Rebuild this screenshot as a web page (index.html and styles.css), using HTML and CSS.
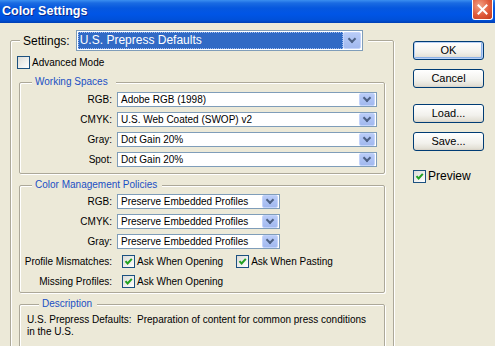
FILE: index.html
```html
<!DOCTYPE html>
<html>
<head>
	<title>Color Settings</title>
	<link rel="stylesheet" href="styles.css">
</head>
<body>
	<div class="window">
		<!-- title bar -->
		<div class="titlebar">
			<span class="title">Color Settings</span>
			<span class="close">
				<svg width="11" height="11" viewBox="0 0 11 11"><path d="M1.5 1.5 L9.5 9.5 M9.5 1.5 L1.5 9.5" stroke="#fff" stroke-width="2" stroke-linecap="square"/></svg>
			</span>
		</div>

		<div class="client">
			<!-- left side: settings groups -->
			<div class="main">
				<fieldset class="group outer">
					<legend class="settings">
						<span class="settings-label">Settings:</span>
						<span class="combo combo-big"><span class="combo-value selected">U.S. Prepress Defaults</span><span class="drop"></span></span>
					</legend>

					<div class="check-row advanced"><span class="check"></span>Advanced Mode</div>

					<fieldset class="group inner spaces">
						<legend>Working Spaces</legend>
						<div class="form-grid">
							<span class="field-label">RGB:</span>
							<span class="combo combo-wide"><span class="combo-value">Adobe RGB (1998)</span><span class="drop"></span></span>
							<span class="field-label">CMYK:</span>
							<span class="combo combo-wide"><span class="combo-value">U.S. Web Coated (SWOP) v2</span><span class="drop"></span></span>
							<span class="field-label">Gray:</span>
							<span class="combo combo-wide"><span class="combo-value">Dot Gain 20%</span><span class="drop"></span></span>
							<span class="field-label">Spot:</span>
							<span class="combo combo-wide"><span class="combo-value">Dot Gain 20%</span><span class="drop"></span></span>
						</div>
					</fieldset>

					<fieldset class="group inner policies">
						<legend>Color Management Policies</legend>
						<div class="form-grid">
							<span class="field-label">RGB:</span>
							<span class="combo combo-short"><span class="combo-value">Preserve Embedded Profiles</span><span class="drop"></span></span>
							<span class="field-label">CMYK:</span>
							<span class="combo combo-short"><span class="combo-value">Preserve Embedded Profiles</span><span class="drop"></span></span>
							<span class="field-label">Gray:</span>
							<span class="combo combo-short"><span class="combo-value">Preserve Embedded Profiles</span><span class="drop"></span></span>
							<span class="field-label">Profile Mismatches:</span>
							<span class="check-group">
								<span class="check-row"><span class="check checked"><svg width="11" height="11" viewBox="0 0 11 11"><path d="M2.5 5.2 L4.6 7.5 L8.8 2.8" fill="none" stroke="#21a121" stroke-width="2"/></svg></span>Ask When Opening</span>
								<span class="check-row"><span class="check checked"><svg width="11" height="11" viewBox="0 0 11 11"><path d="M2.5 5.2 L4.6 7.5 L8.8 2.8" fill="none" stroke="#21a121" stroke-width="2"/></svg></span>Ask When Pasting</span>
							</span>
							<span class="field-label">Missing Profiles:</span>
							<span class="check-group">
								<span class="check-row"><span class="check checked"><svg width="11" height="11" viewBox="0 0 11 11"><path d="M2.5 5.2 L4.6 7.5 L8.8 2.8" fill="none" stroke="#21a121" stroke-width="2"/></svg></span>Ask When Opening</span>
							</span>
						</div>
					</fieldset>

					<fieldset class="group inner description">
						<legend>Description</legend>
						<p class="desc-text">U.S. Prepress Defaults:&nbsp; Preparation of content for common press conditions<br>in the U.S.</p>
					</fieldset>
				</fieldset>
			</div>

			<!-- right side: dialog buttons -->
			<div class="side">
				<div class="btn btn-default">OK</div>
				<div class="btn btn-spaced">Cancel</div>
				<div class="btn">Load...</div>
				<div class="btn">Save...</div>
				<div class="check-row preview"><span class="check checked"><svg width="11" height="11" viewBox="0 0 11 11"><path d="M2.5 5.2 L4.6 7.5 L8.8 2.8" fill="none" stroke="#21a121" stroke-width="2"/></svg></span>Preview</div>
			</div>
		</div>
	</div>
</body>
</html>
```

FILE: styles.css
```css
/* base window */
body {
	margin: 0;
	background-color: #ece9d8;
	font-family: "Liberation Sans", Arial, sans-serif;
	font-size: 10px;
	color: #000;
	overflow: hidden;
}

.window {
	width: 495px;
	height: 346px;
	overflow: hidden;
}

/* title bar */
.titlebar {
	height: 23px;
	display: flex;
	justify-content: space-between;
	align-items: flex-start;
	background: linear-gradient(to bottom, #3b8ff0 0, #1a6be2 3px, #0658de 8px, #0055e6 14px, #0050d8 20px, #003fb2 23px);
}

.title {
	padding-left: 2px;
	line-height: 23px;
	font-size: 12.5px;
	font-weight: bold;
	color: #fff;
	text-shadow: 1px 1px 0 #0a2a8c;
}

.close {
	width: 21px;
	height: 20px;
	margin-right: 2px;
	box-sizing: border-box;
	border: 1px solid #fff;
	border-top: none;
	border-radius: 0 0 3px 3px;
	background: radial-gradient(circle at 35% 30%, #f2a286, #e0593a 55%, #c23a1b);
	display: flex;
	align-items: center;
	justify-content: center;
}

/* client area: two columns */
.client {
	display: flex;
	padding: 7px 0 0 10px;
}

.main {
	width: 384px;
}

/* group boxes */
.group {
	margin: 0;
	padding: 0;
	min-width: 0;
	border: 1px solid #aca899;
	border-radius: 2px;
	box-shadow: 1px 1px 0 #fff, inset 1px 1px 0 #fff;
}

.group legend {
	background-color: #ece9d8;
}

.inner {
	margin: 0 8px;
}

.inner legend {
	margin-left: 12px;
	padding: 0 5px 0 3px;
	line-height: 12px;
	color: #1a4fc4;
}

.spaces {
	margin-top: 7px;
	padding: 4px 7px 6px 0;
}

.spaces legend {
	padding-right: 8px;
}

.policies {
	margin-top: 5px;
	padding: 3px 7px 3px 0;
}

.description {
	margin-top: 5px;
	padding: 4px 7px 40px 7px;
}

.desc-text {
	margin: 0;
	line-height: 12px;
}

/* settings legend */
.settings {
	display: flex;
	align-items: center;
	margin-left: 9px;
	padding: 0 5px 0 3px;
	height: 21px;
}

.settings-label {
	font-size: 12px;
	margin-right: 6px;
}

/* combo boxes */
.combo {
	display: inline-flex;
	box-sizing: border-box;
	height: 15px;
	border: 1px solid #7f9db9;
	background-color: #fff;
	padding: 0 1px 0 0;
}

.combo-value {
	flex: 1;
	padding-left: 3px;
	line-height: 13px;
	white-space: nowrap;
	overflow: hidden;
}

.combo-big {
	width: 287px;
	height: 21px;
	padding: 1px;
}

.combo-big .combo-value {
	font-size: 12px;
	line-height: 17px;
	padding-left: 2px;
}

.selected {
	background-color: #316ac5;
	color: #fff;
	outline: 1px dotted #9fbcf0;
	outline-offset: -1px;
}

.combo-wide {
	width: 260px;
}

.combo-short {
	width: 163px;
}

.drop {
	width: 16px;
	box-sizing: border-box;
	border: 1px solid #c4d4fb;
	border-radius: 2px;
	background: linear-gradient(to bottom, #b8cbf7, #a2b9ef);
	display: flex;
	align-items: center;
	justify-content: center;
}

.combo-big .drop {
	width: 18px;
}

.drop::after {
	content: "";
	width: 4px;
	height: 4px;
	margin-top: -3px;
	border-right: 2px solid #4d6185;
	border-bottom: 2px solid #4d6185;
	transform: rotate(45deg);
}

/* label / field grid */
.form-grid {
	display: grid;
	grid-template-columns: 92px auto;
	grid-auto-rows: 15px;
	column-gap: 5px;
	row-gap: 5px;
	align-items: center;
}

.field-label {
	text-align: right;
	white-space: nowrap;
}

/* checkboxes */
.check-group {
	display: flex;
	gap: 13px;
	padding-left: 5px;
}

.check-row {
	display: flex;
	align-items: center;
	white-space: nowrap;
}

.check {
	width: 13px;
	height: 13px;
	box-sizing: border-box;
	border: 1px solid #1c5180;
	background: linear-gradient(135deg, #dcdcd7, #fff);
	margin-right: 2px;
	display: flex;
	align-items: center;
	justify-content: center;
}

.advanced {
	margin: 5px 0 0 6px;
	height: 13px;
}

.preview {
	margin-top: 18px;
	font-size: 12px;
}

/* dialog buttons */
.side {
	margin: 11px 0 0 19px;
	width: 71px;
}

.btn {
	box-sizing: border-box;
	height: 19px;
	margin-bottom: 9px;
	border: 1px solid #003c74;
	border-radius: 3px;
	background: linear-gradient(to bottom, #fff, #f2f1ec 60%, #e3e0d6 90%, #d6d0c5);
	font-size: 11px;
	line-height: 17px;
	text-align: center;
}

.btn-default {
	box-shadow: inset 0 0 0 1px #b9d1f6, inset -1px -1px 0 1px #8db2e8;
}

.btn-spaced {
	margin-bottom: 16px;
}
```
